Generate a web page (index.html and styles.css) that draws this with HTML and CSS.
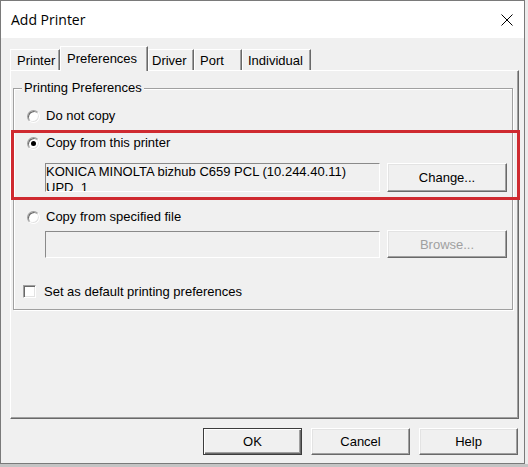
FILE: index.html
```html
<!DOCTYPE html>
<html>
<head>
<meta charset="utf-8">
<link rel="stylesheet" href="styles.css">
</head>
<body>
<div class="screen">
  <div class="window">
    <div class="titlebar">
      <span class="title">Add Printer</span>
      <svg class="close" width="12" height="12" viewBox="0 0 12 12"><path d="M0.5 0.5 L11.5 11.5 M11.5 0.5 L0.5 11.5" stroke="#000" stroke-width="1" fill="none"/></svg>
    </div>
    <div class="client">
      <div class="tabs">
        <div class="tab tab-printer">Printer</div>
        <div class="tab tab-prefs selected">Preferences</div>
        <div class="tab tab-driver">Driver</div>
        <div class="tab tab-port">Port</div>
        <div class="tab tab-indiv">Individual</div>
      </div>
      <div class="page">
        <fieldset class="group">
          <legend>Printing Preferences</legend>
          <div class="option first"><span class="radio"></span><span>Do not copy</span></div>
          <div class="highlight">
            <div class="option"><span class="radio checked"></span><span>Copy from this printer</span></div>
            <div class="fieldrow">
              <div class="textbox">KONICA MINOLTA bizhub C659 PCL (10.244.40.11)<br>UPD_1</div>
              <div class="btn">Change...</div>
            </div>
          </div>
          <div class="option third"><span class="radio"></span><span>Copy from specified file</span></div>
          <div class="fieldrow second">
            <div class="textbox short"></div>
            <div class="btn disabled">Browse...</div>
          </div>
          <div class="check"><span class="box"></span><span>Set as default printing preferences</span></div>
        </fieldset>
      </div>
      <div class="footer">
        <div class="btn dlg default">OK</div>
        <div class="btn dlg">Cancel</div>
        <div class="btn dlg">Help</div>
      </div>
    </div>
  </div>
</div>
</body>
</html>
```
FILE: styles.css
```css
html, body {
  margin: 0;
  padding: 0;
}
body {
  background: #c9c9c9;
  width: 528px;
  height: 467px;
  overflow: hidden;
  font-family: "Liberation Sans", Arial, sans-serif;
  font-size: 13px;
  color: #000;
}
.screen {
  width: 528px;
  height: 467px;
  background: linear-gradient(#ececec, #ececec) top left / 528px 464px no-repeat, #c4c4c4;
}
.window {
  width: 525px;
  height: 464px;
  box-sizing: border-box;
  border: 1px solid #7a7a7a;
  display: flex;
  flex-direction: column;
}
.titlebar {
  height: 37px;
  background: #fff;
  display: flex;
  align-items: center;
  justify-content: space-between;
  padding: 0 11px 0 10px;
  flex: none;
}
.title {
  font-family: "Open Sans", "Noto Sans", sans-serif;
  font-size: 14px;
  color: #000;
}
.close {
  display: block;
  margin-top: 1px;
}
.client {
  flex: 1;
  background: #f0f0f0;
  padding: 8px 6px 0 9px;
  display: flex;
  flex-direction: column;
}
.tabs {
  display: flex;
  align-items: flex-end;
  height: 24px;
}
.tab {
  box-sizing: border-box;
  height: 21px;
  border-top: 1px solid #fff;
  border-left: 1px solid #fff;
  border-right: 1px solid #696969;
  box-shadow: inset -1px 0 0 #a0a0a0;
  padding-top: 3px;
  line-height: 15px;
  white-space: nowrap;
}
.tab-printer { width: 50px; padding-left: 6px; }
.tab-prefs { width: 88px; padding-left: 6px; }
.tab-driver { width: 46px; padding-left: 3px; }
.tab-port { width: 48px; padding-left: 5px; }
.tab-indiv { width: 69px; padding-left: 5px; }
.tab.selected {
  height: 25px;
  margin-bottom: -1px;
  position: relative;
  z-index: 1;
  background: #f0f0f0;
  padding-top: 4px;
}
.page {
  box-sizing: border-box;
  width: 509px;
  height: 349px;
  border-top: 1px solid #fff;
  border-left: 1px solid #fff;
  border-right: 1px solid #696969;
  border-bottom: 1px solid #696969;
  box-shadow: inset -1px -1px 0 #a0a0a0;
  padding: 9px 0 0 2px;
}
.group {
  box-sizing: border-box;
  width: 500px;
  margin: 0;
  padding: 0 0 10px 0;
  min-width: 0;
  border: 1px solid #a0a0a0;
  box-shadow: 1px 1px 0 #fff, inset 1px 1px 0 #fff;
}
.group legend {
  padding: 0 2px;
  margin-left: 8px;
  line-height: 16px;
  background: #f0f0f0;
}
.option {
  display: flex;
  align-items: center;
  gap: 6px;
  height: 16px;
  line-height: 16px;
  padding-left: 13px;
}
.option.first { margin-top: 12px; }
.option.third { margin-top: 17px; }
.radio {
  box-sizing: border-box;
  width: 13px;
  height: 13px;
  border-radius: 50%;
  background: #fff;
  border: 1px solid;
  border-color: #a0a0a0 #fff #fff #a0a0a0;
  box-shadow: inset 1px 1px 0 #696969, inset -1px -1px 0 #e3e3e3;
  display: flex;
  align-items: center;
  justify-content: center;
  flex: none;
}
.radio.checked::after {
  content: "";
  width: 5px;
  height: 5px;
  border-radius: 50%;
  background: #000;
}
.highlight {
  position: relative;
  margin-top: 11px;
}
.highlight::after {
  content: "";
  position: absolute;
  left: -3px;
  right: -8px;
  top: -5px;
  bottom: -8px;
  border: 3px solid #cf2a30;
  pointer-events: none;
}
.fieldrow {
  display: flex;
  align-items: flex-start;
  gap: 7px;
  margin: 12px 0 0 31px;
}
.fieldrow.second { margin-top: 5px; }
.textbox {
  box-sizing: border-box;
  width: 335px;
  height: 29px;
  border: 1px solid;
  border-color: #8a8a8a #fff #fff #8a8a8a;
  background: #f0f0f0;
  line-height: 16px;
  padding: 0;
  overflow: hidden;
  white-space: nowrap;
}
.textbox.short {
  height: 27px;
  margin-top: 1px;
}
.btn {
  box-sizing: border-box;
  width: 120px;
  height: 29px;
  background: #f0f0f0;
  border: 1px solid;
  border-color: #fff #696969 #696969 #fff;
  box-shadow: inset -1px -1px 0 #a0a0a0, inset 1px 1px 0 #e3e3e3;
  display: flex;
  align-items: center;
  justify-content: center;
  flex: none;
}
.fieldrow.second .btn { height: 28px; }
.btn.disabled { color: #a0a0a0; }
.check {
  display: flex;
  align-items: center;
  gap: 8px;
  height: 16px;
  margin-top: 25px;
  padding-left: 9px;
}
.box {
  box-sizing: border-box;
  width: 13px;
  height: 13px;
  background: #fff;
  border: 1px solid;
  border-color: #a0a0a0 #fff #fff #a0a0a0;
  box-shadow: inset 1px 1px 0 #696969, inset -1px -1px 0 #e3e3e3;
  flex: none;
}
.footer {
  display: flex;
  justify-content: flex-end;
  gap: 9px;
  margin-top: 9px;
}
.btn.dlg {
  width: 99px;
  height: 27px;
}
.btn.default {
  border: 1px solid #3c3c3c;
  box-shadow: inset 1px 1px 0 #fff, inset -1px -1px 0 #696969, inset -2px -2px 0 #a0a0a0;
}
```
